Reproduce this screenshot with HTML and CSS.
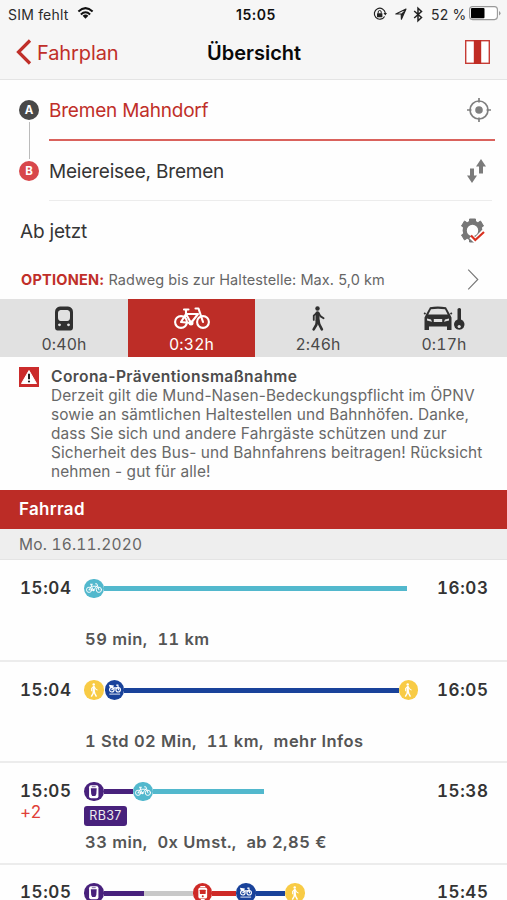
FILE: index.html
```html
<!DOCTYPE html>
<html lang="de">
<head>
<meta charset="utf-8">
<meta name="viewport" content="width=device-width, initial-scale=1">
<title>Übersicht</title>
<link rel="stylesheet" href="styles.css">
</head>
<body>
<svg class="sprite" aria-hidden="true">
  <symbol id="bike" viewBox="0 0 36 23">
    <g fill="none" stroke="currentColor" stroke-width="2.1" stroke-linecap="round" stroke-linejoin="round">
      <circle cx="7" cy="15" r="5.9"/><circle cx="29" cy="15" r="5.9"/>
      <path d="M7 15 12 7 24 7M12 7l5 9 7-9M7 15l10 1M10 2.5h4.500M12 3v4M21.500 1.500h3L29 15"/>
    </g>
    <circle cx="17" cy="16" r="2.500" fill="currentColor"/>
  </symbol>
  <symbol id="walk" viewBox="0 0 14 26">
    <circle cx="6.500" cy="2.600" r="2.300" fill="currentColor"/>
    <g fill="none" stroke="currentColor" stroke-linecap="round" stroke-linejoin="round">
      <path d="M6.500 7.500v7.500" stroke-width="4.200"/>
      <path d="M6 7 2.600 10v4.500M7.500 7.200 9.800 10.800 12.800 12.800" stroke-width="1.900"/>
      <path d="M6 15 5.300 19.500 2.500 24.300M7.300 15 8.300 19 11 24.300" stroke-width="2.700"/>
    </g>
  </symbol>
  <symbol id="train" viewBox="0 0 18 24">
    <path fill="currentColor" fill-rule="evenodd" d="M5 0h8c3 .3 5 2.300 5 5.500V21c0 1.800-1 3-2.500 3h-13C1 24 0 22.800 0 21V5.500C0 2.300 2 .3 5 0zM5.500 3.500C4 3.800 3 5 3 6.500V11c0 2 1 3.500 2.700 3.500h6.600c1.700 0 2.700-1.500 2.700-3.500V6.500c0-1.500-1-2.700-2.500-3zM4.500 16.900a1.400 1.400 0 1 0 .01 0zM13.500 16.900a1.400 1.400 0 1 0 .01 0z"/>
  </symbol>
  <symbol id="rail" viewBox="0 0 20 20">
    <rect x="5.200" y="3.300" width="9.600" height="13.400" rx="2" fill="#fff"/>
    <path d="M7 6.300h6l-.4 6-1 2H8.400l-1-2z" fill="currentColor"/>
    <path d="M8 4.800h4" stroke="currentColor" stroke-width=".7"/>
  </symbol>
  <symbol id="tram" viewBox="0 0 20 20">
    <rect x="5.500" y="4.500" width="9" height="11.500" rx="2" fill="#fff"/>
    <rect x="7" y="7" width="6" height="4.300" rx=".5" fill="currentColor"/>
    <path d="M7.500 3.500h5M8 17h4" stroke="#fff" stroke-width="1.100"/>
    <circle cx="10" cy="13.600" r="1" fill="currentColor"/>
  </symbol>
  <symbol id="share" viewBox="0 0 20 20">
    <g fill="none" stroke="#fff" stroke-width="1.200" stroke-linecap="round">
      <circle cx="7" cy="10" r="2.300"/><circle cx="13.500" cy="10" r="2.300"/>
      <path d="M7 10 9.500 8l4-.2M12 5.300h1.200l.6 4.700"/>
      <path d="M4.500 14.500h11" stroke="#b9c6e2" stroke-width="1.200" stroke-linecap="butt"/>
    </g>
    <path d="M4 4.800 9.200 5.700 7.800 8.700 5 8z" fill="#fff"/>
  </symbol>
</svg>

<header class="top">
  <div class="status">
    <span class="carrier">SIM fehlt</span>
    <svg class="wifi" viewBox="0 0 18 13"><g fill="none" stroke="#111" stroke-width="2.200"><path d="M1.300 4.800Q9-2.300 16.700 4.800"/><path d="M4 8Q9 3.400 14 8"/></g><path d="M5.900 9.500Q9 7 12.100 9.500L9 12.600z" fill="#111"/></svg>
    <span class="clock">15:05</span>
    <svg class="lock" viewBox="0 0 14 14"><path d="M11.600 9.500A5.500 5.500 0 1 1 12.300 6" fill="none" stroke="#222" stroke-width="1.200"/><path d="M10.500 6h3.500l-1.700 2.600z" fill="#222"/><rect x="4" y="6.200" width="5.400" height="4" rx=".4" fill="#222"/><path d="M5.200 6.500V5a1.500 1.500 0 0 1 3 0v1.500" fill="none" stroke="#222" stroke-width="1"/></svg>
    <svg class="arrow" viewBox="0 0 12 12"><path d="M.8 6 11 1 6.400 11.200 6.200 6z" fill="none" stroke="#222" stroke-width="1.100" stroke-linejoin="round"/><path d="M6 6 11 1 6.600 10.500z" fill="#222"/></svg>
    <svg class="bt" viewBox="0 0 10 15"><path d="M1.200 4 8.500 10.500 5 13.700V1.300L8.500 4.500 1.200 11" fill="none" stroke="#222" stroke-width="1.500"/></svg>
    <span class="percent">52 %</span>
    <svg class="battery" viewBox="0 0 32 15"><rect x=".6" y=".6" width="27.800" height="13" rx="3" fill="#fff" stroke="#999" stroke-width="1.100"/><rect x="2" y="2" width="13.500" height="10.200" rx="1" fill="#000"/><path d="M30 5v4.500q1.500-.7 1.500-2.200T30 5" fill="#999"/></svg>
  </div>
  <nav class="nav">
    <a class="back"><svg class="chev" viewBox="0 0 16 26"><path d="M14 1.500 2.500 13 14 24.500" fill="none" stroke="currentColor" stroke-width="3.200"/></svg><span>Fahrplan</span></a>
    <h1>Übersicht</h1>
    <svg class="map" viewBox="0 0 25 24"><rect x=".7" y=".7" width="23.600" height="22.600" fill="#fff" stroke="#c63c35" stroke-width="1.400"/><path d="M8.800 0h7.400v24H8.800z" fill="#c02c24"/></svg>
  </nav>
</header>

<section class="form">
  <div class="stops">
    <div class="rail-ab"><span class="dot a">A</span><i></i><span class="dot b">B</span></div>
    <div class="fields">
      <div class="field from"><span>Bremen Mahndorf</span>
        <svg class="target" viewBox="0 0 24 24"><g fill="none" stroke="#808080" stroke-width="1.700"><circle cx="12" cy="12" r="9"/><path d="M12 0v4.500M12 19.500V24M0 12h4.500M19.500 12H24"/></g><circle cx="12" cy="12" r="3.800" fill="#808080"/></svg></div>
      <div class="field to"><span>Meiereisee, Bremen</span>
        <svg class="swap" viewBox="0 0 19 24"><path d="M3 9.500h4v7h3L5 24 0 16.500h3zM12 14.500h4V7.500h3L14 0 9 7.500h3z" fill="#7b7b7b"/></svg></div>
    </div>
  </div>
  <div class="when"><span>Ab jetzt</span>
    <svg class="gear" viewBox="0 0 26 26"><circle cx="12.500" cy="12.500" r="7.800" fill="none" stroke="#777" stroke-width="4.200"/><path d="M9.500 1h6v3h-6zM9.500 21h6v3h-6zM1.500 8l3-5 3 2-3 5zM23.500 8l-3-5-3 2 3 5zM1.500 17l3 5 3-2-3-5z" fill="#777" stroke="#777"/><path d="M11 18.500 15.300 22.500 24 13.500" fill="none" stroke="#fff" stroke-width="5"/><path d="M11 17.500 15.300 22 24 14" fill="none" stroke="#d9301f" stroke-width="2.200"/></svg></div>
  <div class="options"><p><b>OPTIONEN:</b> <span>Radweg bis zur Haltestelle: Max. 5,0 km</span></p>
    <svg class="more" viewBox="0 0 12 22"><path d="M1 .7 11 11 1 21.300" fill="none" stroke="#777" stroke-width="1.200"/></svg></div>
</section>

<div class="tabs">
  <div class="tab"><svg class="i-train"><use href="#train"/></svg><span>0:40h</span></div>
  <div class="tab on"><svg class="i-bike"><use href="#bike"/></svg><span>0:32h</span></div>
  <div class="tab"><svg class="i-walk"><use href="#walk"/></svg><span>2:46h</span></div>
  <div class="tab"><svg class="i-car" viewBox="0 0 40 24"><path fill="#303030" fill-rule="evenodd" d="M6 .8Q13.500-.6 22 .8L26 8l1.500 3v12.500H23V20H5v3.500H.5V11L2 8zM7 2.800 4.300 8h19.400L21 2.800Q14 1.500 7 2.800zM3 12v2l5 1.300-1-2.300zM25 12v2l-5 1.300 1-2.300zM9.800 12.500h8.400v3H9.800z"/><path d="M1.500 6.500.2 7.500M26.500 6.500l1.300 1" stroke="#303030" stroke-width="2"/><path d="M33.500 2.500q2-2 3.500 0V13a5.300 5.300 0 1 1-3.500 0z" fill="#303030"/><circle cx="35.200" cy="20" r="1.600" fill="#e1e1e1"/></svg><span>0:17h</span></div>
</div>

<section class="notice">
  <svg class="warn" viewBox="0 0 20 20"><rect width="20" height="20" fill="#cb2c2c"/><path d="M10 3.500 17.500 16.500h-15z" fill="#fff" stroke="#fff" stroke-linejoin="round"/><path d="M10 6.700v5.500" stroke="#222" stroke-width="2"/><circle cx="10" cy="14.500" r="1.100" fill="#222"/></svg>
  <div class="msg"><h2>Corona-Präventionsmaßnahme</h2>
  <p>Derzeit gilt die Mund-Nasen-Bedeckungspflicht im ÖPNV<br>sowie an sämtlichen Haltestellen und Bahnhöfen. Danke,<br>dass Sie sich und andere Fahrgäste schützen und zur<br>Sicherheit des Bus- und Bahnfahrens beitragen! Rücksicht<br>nehmen - gut für alle!</p></div>
</section>

<h2 class="mode">Fahrrad</h2>
<div class="date"><span>Mo. 16.11.2020</span></div>

<main class="trips">
  <article class="trip">
    <div class="dep"><time>15:04</time></div>
    <div class="mid">
      <div class="track"><span class="node cyan"><svg class="n-bike"><use href="#bike"/></svg></span><i class="seg cyan grow"></i></div>
      <div class="tags"></div>
      <p class="info">59 min,&nbsp; 11 km</p>
    </div>
    <time class="arr">16:03</time>
  </article>
  <article class="trip">
    <div class="dep"><time>15:04</time></div>
    <div class="mid">
      <div class="track over"><span class="node yellow"><svg class="n-walk"><use href="#walk"/></svg></span><i class="gap"></i><span class="node blue"><svg class="n-full"><use href="#share"/></svg></span><i class="seg blue grow"></i><span class="node yellow"><svg class="n-walk"><use href="#walk"/></svg></span></div>
      <div class="tags"></div>
      <p class="info">1 Std 02 Min,&nbsp; 11 km,&nbsp; mehr Infos</p>
    </div>
    <time class="arr">16:05</time>
  </article>
  <article class="trip">
    <div class="dep"><time>15:05</time><span class="delay">+2</span></div>
    <div class="mid">
      <div class="track"><span class="node purple"><svg class="n-full"><use href="#rail"/></svg></span><i class="seg purple w30"></i><span class="node cyan"><svg class="n-bike"><use href="#bike"/></svg></span><i class="seg cyan w111"></i></div>
      <div class="tags"><span class="tag">RB37</span></div>
      <p class="info">33 min,&nbsp; 0x Umst.,&nbsp; ab 2,85 €</p>
    </div>
    <time class="arr">15:38</time>
  </article>
  <article class="trip last">
    <div class="dep"><time>15:05</time></div>
    <div class="mid">
      <div class="track"><span class="node purple"><svg class="n-full"><use href="#rail"/></svg></span><i class="seg purple w40"></i><i class="seg grey w49"></i><span class="node red"><svg class="n-full"><use href="#tram"/></svg></span><i class="seg red w24"></i><span class="node blue"><svg class="n-full"><use href="#share"/></svg></span><i class="seg blue w29"></i><span class="node yellow"><svg class="n-walk"><use href="#walk"/></svg></span></div>
    </div>
    <time class="arr">15:45</time>
  </article>
</main>
</body>
</html>
```

FILE: styles.css
```css
* { box-sizing: border-box; margin: 0; padding: 0; }
html, body { height: 900px; overflow: hidden; }
body { width: 507px; background: #fefefe; color: #353535; font-family: Inter, "Liberation Sans", sans-serif; }
svg { display: block; flex: none; overflow: visible; }
.sprite { position: absolute; width: 0; height: 0; }

.top { height: 80px; background: #f6f6f6; border-bottom: 1px solid #e4e4e4; }
.status { height: 28px; display: flex; align-items: center; padding-left: 8px; font-size: 14px; color: #2a2a2a; white-space: nowrap; }
.carrier { width: 61px; letter-spacing: .2px; }
.wifi { width: 17px; height: 12px; margin-left: 8px; margin-top: -2px; }
.clock { width: 60px; margin-left: 142px; font-weight: 600; color: #111; letter-spacing: .55px; }
.lock { width: 14px; height: 14px; margin-left: 77px; }
.arrow { width: 12px; height: 12px; margin-left: 8px; }
.bt { width: 10px; height: 15px; margin-left: 6px; }
.percent { width: 36px; margin-left: 8px; letter-spacing: .2px; }
.battery { width: 32px; height: 15px; margin-left: 2px; margin-top: -1px; }
.nav { height: 50px; display: grid; grid-template-columns: 191px 1fr 189px; align-items: center; padding: 0 24px 0 16px; }
.back { display: flex; align-items: center; gap: 5px; color: #c02f29; font-size: 20px; letter-spacing: -.1px; }
.chev { width: 16px; height: 26px; margin-top: -2px; }
.nav h1 { font-size: 20px; font-weight: 600; color: #090909; text-align: center; white-space: nowrap; }
.map { width: 25px; height: 24px; justify-self: end; margin-top: -2px; }

.form { height: 219px; color: #353535; font-size: 19px; letter-spacing: -.2px; }
.stops { height: 121px; display: flex; padding-left: 19px; }
.rail-ab { width: 30px; padding-top: 20px; display: flex; flex-direction: column; align-items: flex-start; }
.rail-ab i { width: 1.5px; height: 37px; background: #bbb; margin: 2px 0 2px 9.5px; }
.dot { width: 20px; height: 20px; border-radius: 50%; color: #fff; font-size: 11.5px; letter-spacing: 0; font-weight: 700; display: flex; align-items: center; justify-content: center; }
.dot.a { background: #484848; }
.dot.b { background: #d8474b; }
.fields { flex: 1; }
.field { display: flex; align-items: center; justify-content: space-between; }
.field span { padding-top: 2px; }
.from { height: 61px; color: #c02f29; border-bottom: 2px solid #da625d; padding: 0 4px 0 0; margin-right: 12px; }
.to { height: 60px; border-bottom: 1px solid #ececec; margin-right: 15px; padding-right: 6px; }
.target { width: 24px; height: 24px; }
.swap { width: 19px; height: 24px; }
.when { height: 60px; padding: 0 21px 0 20px; display: flex; align-items: center; justify-content: space-between; }
.gear { width: 26px; height: 26px; }
.options { height: 37px; padding: 0 28px 0 21px; display: flex; align-items: center; justify-content: space-between; font-size: 14.5px; letter-spacing: .08px; color: #666; }
.options b { color: #c02f29; font-size: 14.5px; letter-spacing: .23px; }
.more { width: 12px; height: 21px; }

.tabs { height: 58px; display: grid; grid-template-columns: 128px 127px 126px 126px; background: #e1e1e1; color: #303030; }
.tab { display: flex; flex-direction: column; align-items: center; padding-top: 7px; }
.tab svg { height: 25px; }
.tab span { margin-top: 4px; font-size: 15.8px; line-height: 20px; letter-spacing: .15px; color: #494949; font-variant-numeric: tabular-nums; }
.tab.on { background: #bd2d27; color: #fff; }
.tab.on span { color: #fff; }
.tab .i-train { width: 18px; }
.tab .i-bike { width: 36px; }
.tab .i-walk { width: 14px; }
.tab .i-car { width: 40px; }

.notice { height: 133px; display: flex; gap: 12px; padding: 10px 0 0 19px; white-space: nowrap; }
.warn { width: 20px; height: 20px; }
.msg h2 { font-size: 15.6px; line-height: 20px; font-weight: 600; color: #4c4c4c; letter-spacing: .4px; }
.msg p { font-size: 15.4px; line-height: 18.9px; color: #686868; letter-spacing: .13px; }

.mode { height: 39px; line-height: 39px; padding-left: 19px; background: #bc2c26; color: #fff; font-size: 17px; font-weight: 600; letter-spacing: .3px; }
.date { height: 31px; display: flex; align-items: center; padding-left: 19px; background: #eee; border-bottom: 1px solid #e4e4e4; font-size: 15.5px; color: #666; letter-spacing: .2px; font-variant-numeric: tabular-nums; }

.trip { height: 101.5px; border-bottom: 2px solid #ececec; display: grid; grid-template-columns: 84px 323px 100px; white-space: nowrap; font-variant-numeric: tabular-nums; }
.dep { padding: 17px 0 0 20px; }
.dep time, .arr { display: block; font-size: 17px; line-height: 22px; font-weight: 600; letter-spacing: .6px; color: #333; }
.arr { padding: 17px 0 0 30px; }
.delay { font-size: 17px; line-height: 20px; color: #e04038; letter-spacing: -.4px; }
.mid { padding-top: 18.5px; }
.track { height: 20px; display: flex; align-items: center; }
.track.over { margin-right: -11px; }
.node { width: 19.5px; height: 19.5px; flex: none; border-radius: 50%; display: flex; align-items: center; justify-content: center; color: #fff; }
.seg { height: 5px; flex: none; }
.gap { width: 1.3px; }
.grow { flex: 1; }
.w24 { width: 24px; } .w29 { width: 29.5px; } .w30 { width: 29.5px; } .w40 { width: 40.5px; } .w49 { width: 48.5px; } .w111 { width: 111px; }
.cyan { background: #52b8cd; }
.blue { background: #19429a; color: #19429a; }
.yellow { background: #f8cb45; }
.purple { background: #48217c; color: #48217c; }
.red { background: #ce2a27; color: #ce2a27; }
.grey { background: #c8c8c8; }
.node.yellow, .node.cyan { color: #fff; }
.n-bike { width: 16px; height: 10.5px; }
.n-walk { width: 8px; height: 14px; }
.n-full { width: 19.5px; height: 19.5px; }
.tags { height: 30.5px; padding-top: 4px; }
.tag { display: block; width: 43px; height: 20px; border-radius: 3px; background: #48217c; color: #eee; font-size: 12.5px; line-height: 20px; text-align: center; letter-spacing: .4px; font-variant-numeric: normal; }
.info { font-size: 16.5px; line-height: 21px; font-weight: 600; color: #555; letter-spacing: .45px; padding-left: 1px; }
.trip.last { height: 35.5px; border-bottom: 0; }
.last .dep, .last .arr { padding-top: 19.5px; }
.last .dep time, .last .arr { line-height: 16px; }
```
